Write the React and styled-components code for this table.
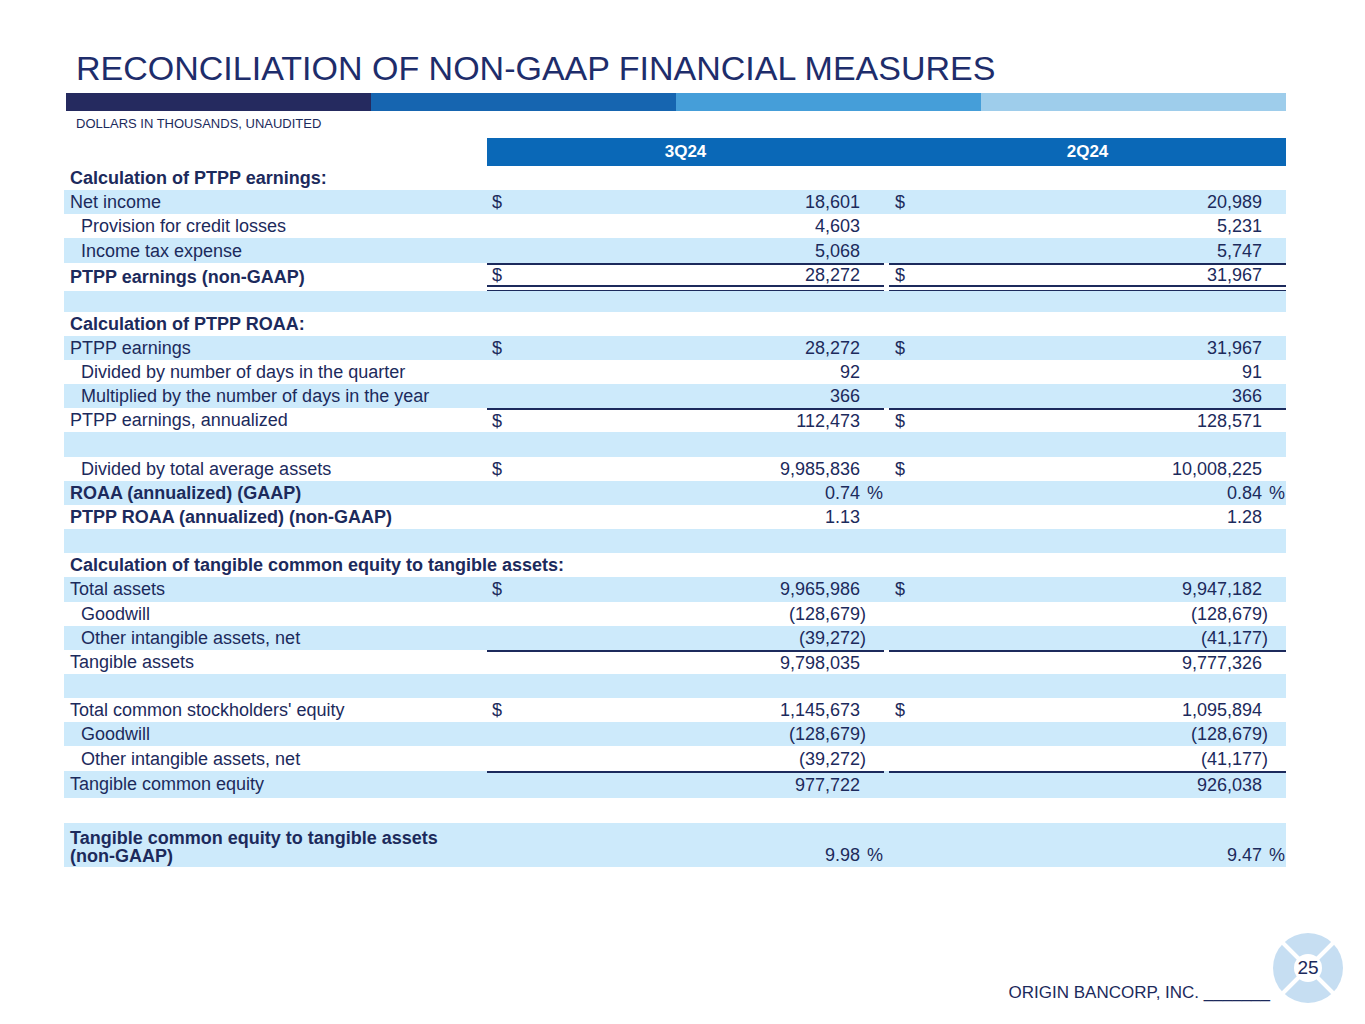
import styled, { createGlobalStyle } from "styled-components";

const NAVY = "#1c2a5c";
const ROW_BLUE = "#cdeafb";
const HEAD_BLUE = "#0a68b7";

const GlobalStyle = createGlobalStyle`
  html, body {
    margin: 0;
    padding: 0;
    background: #ffffff;
  }
  body {
    font-family: "Liberation Sans", Arial, sans-serif;
    color: ${NAVY};
  }
`;

const Page = styled.div`
  width: 1365px;
  height: 1024px;
  box-sizing: border-box;
  padding: 49px 0 0 64px;
  display: flex;
  flex-direction: column;
  overflow: hidden;
`;

const Title = styled.h1`
  margin: 0 0 0 12px;
  font-size: 34px;
  line-height: 39px;
  font-weight: 400;
  color: #1e2d6b;
  white-space: nowrap;
`;

const Stripe = styled.div`
  display: flex;
  width: 1220px;
  height: 18px;
  margin: 5px 0 0 2px;
`;

const StripeSeg = styled.div`
  flex: 1;
  background: ${(p) => p.$c};
`;

const Subtitle = styled.div`
  margin: 5px 0 0 12px;
  font-size: 13px;
  line-height: 15px;
  color: ${NAVY};
`;

const Table = styled.div`
  margin-top: 7px;
  width: 1222px;
  display: flex;
  flex-direction: column;
  font-size: 18px;
`;

const HeaderRow = styled.div`
  display: grid;
  grid-template-columns: 423px 397px 5px 397px;
  height: 28px;
`;

const HeadCell = styled.div`
  background: ${HEAD_BLUE};
  color: #ffffff;
  font-weight: 700;
  font-size: 17px;
  display: flex;
  align-items: center;
  justify-content: center;
`;

const Row = styled.div`
  display: grid;
  grid-template-columns: 423px 397px 5px 397px;
  height: ${(p) => p.$h}px;
  background: ${(p) => (p.$shade ? ROW_BLUE : "transparent")};
`;

const Label = styled.div`
  display: flex;
  align-items: ${(p) => (p.$bottom ? "flex-end" : "center")};
  padding: 0 0 ${(p) => (p.$bottom ? "2px" : "0")} ${(p) => 6 + (p.$indent ? 11 : 0)}px;
  font-weight: ${(p) => (p.$bold ? 700 : 400)};
  line-height: 18px;
  white-space: ${(p) => (p.$bottom ? "pre-line" : "nowrap")};
`;

const ValueCell = styled.div`
  box-sizing: border-box;
  display: flex;
  align-items: ${(p) => (p.$bottom ? "flex-end" : "center")};
  padding-bottom: ${(p) => (p.$bottom ? "2px" : "0")};
  padding-left: ${(p) => p.$pl}px;
  border-top: ${(p) => (p.$top ? `2px solid ${NAVY}` : "none")};
  border-bottom: ${(p) => (p.$double ? `7px double ${NAVY}` : "none")};
  line-height: 20px;
`;

const Dollar = styled.span`
  width: 14px;
`;

const Num = styled.span`
  margin-left: auto;
  white-space: nowrap;
`;

const Suffix = styled.span`
  width: 24px;
  box-sizing: border-box;
  padding-left: ${(p) => (p.$pct ? 7 : 0)}px;
  white-space: nowrap;
`;

const Footer = styled.div`
  margin-top: auto;
  margin-bottom: 20px;
  width: 1280px;
  display: flex;
  justify-content: flex-end;
  align-items: flex-end;
`;

const FooterText = styled.div`
  font-size: 17px;
  line-height: 20px;
  color: ${NAVY};
  margin: 0 2px 1px 0;
  white-space: pre;
`;

const Badge = styled.div`
  position: relative;
  width: 72px;
  height: 72px;
`;

const PageNum = styled.span`
  position: absolute;
  left: 0;
  right: 0;
  top: 25px;
  text-align: center;
  font-size: 19px;
  line-height: 22px;
  color: ${NAVY};
`;

const R = 24.16;

const rows = [
  { label: "Calculation of PTPP earnings:", bold: true },
  { label: "Net income", a: { d: true, v: "18,601" }, b: { d: true, v: "20,989" } },
  { label: "Provision for credit losses", indent: true, a: { v: "4,603" }, b: { v: "5,231" } },
  { label: "Income tax expense", indent: true, a: { v: "5,068" }, b: { v: "5,747" } },
  { label: "PTPP earnings (non-GAAP)", bold: true, top: true, double: true, h: 28, a: { d: true, v: "28,272" }, b: { d: true, v: "31,967" } },
  { label: "", h: 21 },
  { label: "Calculation of PTPP ROAA:", bold: true },
  { label: "PTPP earnings", a: { d: true, v: "28,272" }, b: { d: true, v: "31,967" } },
  { label: "Divided by number of days in the quarter", indent: true, a: { v: "92" }, b: { v: "91" } },
  { label: "Multiplied by the number of days in the year", indent: true, a: { v: "366" }, b: { v: "366" } },
  { label: "PTPP earnings, annualized", top: true, a: { d: true, v: "112,473" }, b: { d: true, v: "128,571" } },
  { label: "" },
  { label: "Divided by total average assets", indent: true, a: { d: true, v: "9,985,836" }, b: { d: true, v: "10,008,225" } },
  { label: "ROAA (annualized) (GAAP)", bold: true, a: { v: "0.74", s: "%" }, b: { v: "0.84", s: "%" } },
  { label: "PTPP ROAA (annualized) (non-GAAP)", bold: true, a: { v: "1.13" }, b: { v: "1.28" } },
  { label: "" },
  { label: "Calculation of tangible common equity to tangible assets:", bold: true },
  { label: "Total assets", a: { d: true, v: "9,965,986" }, b: { d: true, v: "9,947,182" } },
  { label: "Goodwill", indent: true, a: { v: "(128,679", s: ")" }, b: { v: "(128,679", s: ")" } },
  { label: "Other intangible assets, net", indent: true, a: { v: "(39,272", s: ")" }, b: { v: "(41,177", s: ")" } },
  { label: "Tangible assets", top: true, a: { v: "9,798,035" }, b: { v: "9,777,326" } },
  { label: "" },
  { label: "Total common stockholders' equity", a: { d: true, v: "1,145,673" }, b: { d: true, v: "1,095,894" } },
  { label: "Goodwill", indent: true, a: { v: "(128,679", s: ")" }, b: { v: "(128,679", s: ")" } },
  { label: "Other intangible assets, net", indent: true, a: { v: "(39,272", s: ")" }, b: { v: "(41,177", s: ")" } },
  { label: "Tangible common equity", top: true, h: 27, a: { v: "977,722" }, b: { v: "926,038" } },
  { label: "", h: 25 },
  {
    label: "Tangible common equity to tangible assets\n(non-GAAP)",
    bold: true,
    bottom: true,
    h: 44,
    a: { v: "9.98", s: "%" },
    b: { v: "9.47", s: "%" },
  },
];

function Value({ cell, row, pl }) {
  return (
    <ValueCell $top={row.top} $double={row.double} $bottom={row.bottom} $pl={pl}>
      {cell && (
        <>
          <Dollar>{cell.d ? "$" : ""}</Dollar>
          <Num>{cell.v}</Num>
          <Suffix $pct={cell.s === "%"}>{cell.s || ""}</Suffix>
        </>
      )}
    </ValueCell>
  );
}

function Logo() {
  return (
    <Badge>
      <svg width="72" height="72" viewBox="0 0 72 72">
        <circle cx="36" cy="36" r="35" fill="#c6def2" />
        <line x1="8" y1="8" x2="64" y2="64" stroke="#ffffff" strokeWidth="4" />
        <line x1="64" y1="8" x2="8" y2="64" stroke="#ffffff" strokeWidth="4" />
        <circle cx="36" cy="36" r="14" fill="#ffffff" />
      </svg>
      <PageNum>25</PageNum>
    </Badge>
  );
}

export default function App() {
  return (
    <>
      <GlobalStyle />
      <Page>
        <Title>RECONCILIATION OF NON-GAAP FINANCIAL MEASURES</Title>
        <Stripe>
          <StripeSeg $c="#252a5f" />
          <StripeSeg $c="#1665b0" />
          <StripeSeg $c="#459ed9" />
          <StripeSeg $c="#9ecdeb" />
        </Stripe>
        <Subtitle>DOLLARS IN THOUSANDS, UNAUDITED</Subtitle>
        <Table>
          <HeaderRow>
            <div />
            <HeadCell>3Q24</HeadCell>
            <HeadCell />
            <HeadCell>2Q24</HeadCell>
          </HeaderRow>
          {rows.map((row, i) => (
            <Row key={i} $h={row.h || R} $shade={i % 2 === 1}>
              <Label $bold={row.bold} $indent={row.indent} $bottom={row.bottom}>
                {row.label}
              </Label>
              <Value cell={row.a} row={row} pl={5} />
              <div />
              <Value cell={row.b} row={row} pl={6} />
            </Row>
          ))}
        </Table>
        <Footer>
          <FooterText>ORIGIN BANCORP, INC. _______</FooterText>
          <Logo />
        </Footer>
      </Page>
    </>
  );
}
